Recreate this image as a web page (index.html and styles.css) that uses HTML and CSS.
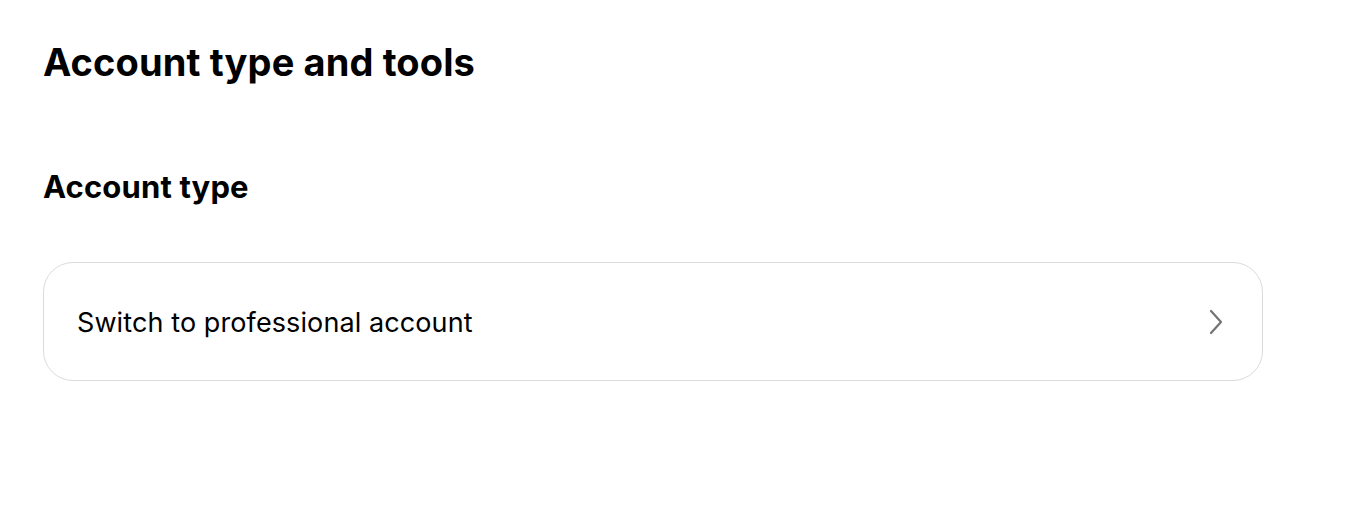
FILE: index.html
```html
<!DOCTYPE html>
<html lang="en">
<head>
  <meta charset="UTF-8">
  <meta name="viewport" content="width=device-width, initial-scale=1.0">
  <title>Account type and tools</title>
  <link rel="stylesheet" href="styles.css">
</head>
<body>

  <div class="page">
    <h1 class="page-title">Account type and tools</h1>

    <h2 class="section-title">Account type</h2>

    <a class="row-card" href="#">
      <span class="row-label">Switch to professional account</span>
      <svg class="chevron" width="16" height="26" viewBox="0 0 16 26" fill="none" stroke="#737373" stroke-width="2.2" stroke-linecap="round" stroke-linejoin="round">
        <polyline points="3,2 13,13 3,24"></polyline>
      </svg>
    </a>
  </div>

</body>
</html>
```

FILE: styles.css
```css
body {
  margin: 0;
  background-color: #fff;
  color: #000;
  font-family: Inter, "Noto Sans", Arial, sans-serif;
}

.page {
  padding: 36px 43px;
  width: 1220px;
}

.page-title {
  font-size: 38px;
  font-weight: 700;
  margin: 0;
  line-height: 52px;
  letter-spacing: 0.12px;
}

.section-title {
  font-size: 31px;
  font-weight: 700;
  margin: 81px 0 0;
  line-height: 36px;
  letter-spacing: 0.15px;
}

.row-card {
  display: flex;
  align-items: center;
  justify-content: space-between;
  margin-top: 57px;
  height: 116px;
  padding: 1px 38px 0 33px;
  border: 1px solid #dbdbdb;
  border-radius: 30px;
  text-decoration: none;
  color: #000;
}

.row-label {
  font-size: 27px;
  font-weight: 400;
  letter-spacing: 0.1px;
}

.chevron {
  display: block;
}
```
